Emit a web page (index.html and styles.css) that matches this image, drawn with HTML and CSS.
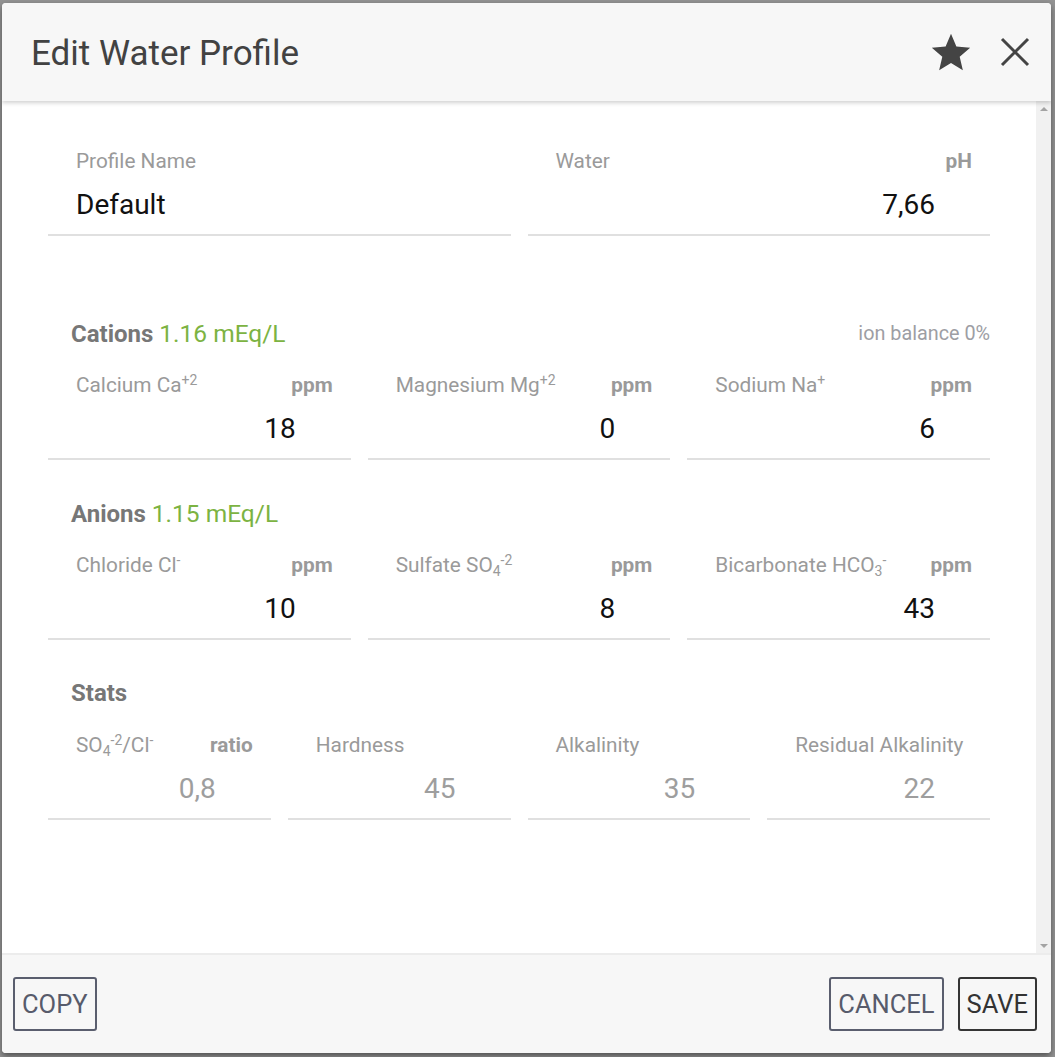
FILE: index.html
```html
<!DOCTYPE html>
<html lang="en">
<head>
<meta charset="utf-8">
<title>Edit Water Profile</title>
<link rel="stylesheet" href="styles.css">
</head>
<body>
<div class="dialog">
  <header class="dlg-head">
    <h1 class="title">Edit Water Profile</h1>
    <button class="icon-btn" aria-label="Favorite">
      <svg width="46" height="46" viewBox="0 0 24 24"><path d="M12 17.27L18.18 21l-1.64-7.03L22 9.24l-7.19-.61L12 2 9.19 8.63 2 9.24l5.46 4.73L5.82 21z" fill="#444"/></svg>
    </button>
    <button class="icon-btn close" aria-label="Close">
      <svg width="48" height="48" viewBox="0 0 48 48"><path d="M11 11L37 37M37 11L11 37" stroke="#444" stroke-width="3" fill="none"/></svg>
    </button>
  </header>

  <div class="dlg-main">
    <main class="dlg-body">
      <div class="grid g2">
        <div class="field">
          <div class="lbl"><span>Profile Name</span></div>
          <div class="val left">Default</div>
        </div>
        <div class="field">
          <div class="lbl"><span>Water</span><b>pH</b></div>
          <div class="val">7,66</div>
        </div>
      </div>

      <div class="sec first">
        <h2>Cations <span class="meq">1.16 mEq/L</span></h2>
        <span class="bal">ion balance 0%</span>
      </div>
      <div class="grid g3">
        <div class="field">
          <div class="lbl"><span>Calcium Ca<sup>+2</sup></span><b>ppm</b></div>
          <div class="val">18</div>
        </div>
        <div class="field">
          <div class="lbl"><span>Magnesium Mg<sup>+2</sup></span><b>ppm</b></div>
          <div class="val">0</div>
        </div>
        <div class="field">
          <div class="lbl"><span>Sodium Na<sup>+</sup></span><b>ppm</b></div>
          <div class="val">6</div>
        </div>
      </div>

      <div class="sec">
        <h2>Anions <span class="meq">1.15 mEq/L</span></h2>
      </div>
      <div class="grid g3">
        <div class="field">
          <div class="lbl"><span>Chloride Cl<sup>-</sup></span><b>ppm</b></div>
          <div class="val">10</div>
        </div>
        <div class="field">
          <div class="lbl"><span>Sulfate SO<sub>4</sub><sup>-2</sup></span><b>ppm</b></div>
          <div class="val">8</div>
        </div>
        <div class="field">
          <div class="lbl"><span>Bicarbonate HCO<sub>3</sub><sup>-</sup></span><b>ppm</b></div>
          <div class="val">43</div>
        </div>
      </div>

      <div class="sec">
        <h2>Stats</h2>
      </div>
      <div class="grid g4">
        <div class="field ro">
          <div class="lbl"><span>SO<sub>4</sub><sup>-2</sup>/Cl<sup>-</sup></span><b>ratio</b></div>
          <div class="val">0,8</div>
        </div>
        <div class="field ro">
          <div class="lbl"><span>Hardness</span></div>
          <div class="val">45</div>
        </div>
        <div class="field ro">
          <div class="lbl"><span>Alkalinity</span></div>
          <div class="val">35</div>
        </div>
        <div class="field ro">
          <div class="lbl"><span>Residual Alkalinity</span></div>
          <div class="val">22</div>
        </div>
      </div>
    </main>
    <div class="scrollbar" aria-hidden="true">
      <span class="sb-btn"><i class="arrow up"></i></span>
      <span class="sb-btn"><i class="arrow down"></i></span>
    </div>
  </div>

  <footer class="dlg-foot">
    <button class="btn">COPY</button>
    <div class="actions">
      <button class="btn">CANCEL</button>
      <button class="btn primary">SAVE</button>
    </div>
  </footer>
</div>
</body>
</html>
```

FILE: styles.css
```css
* { box-sizing: border-box; }

html, body {
  margin: 0;
  height: 100%;
}

body {
  background: #939393;
  padding: 3px 0 0 2px;
  font-family: Roboto, "Noto Sans", Arial, sans-serif;
  overflow: hidden;
}

.dialog {
  width: 1049px;
  height: 1050px;
  background: #fff;
  border-radius: 4px;
  overflow: hidden;
  display: flex;
  flex-direction: column;
  box-shadow: 0 3px 6px rgba(0, 0, 0, 0.45);
}

/* header */
.dlg-head {
  flex: 0 0 98px;
  display: flex;
  align-items: center;
  padding: 2px 12px 0 29px;
  background: #f7f7f7;
  box-shadow: 0 2px 4px rgba(0, 0, 0, 0.18);
  position: relative;
  z-index: 1;
}

.title {
  flex: 1;
  margin: 0;
  font-size: 35px;
  font-weight: 400;
  color: #424242;
}

.icon-btn {
  border: 0;
  background: none;
  padding: 0;
  margin: 0;
  display: flex;
  cursor: pointer;
}

.icon-btn.close {
  margin-left: 17px;
  margin-top: -2px;
}

/* body + fake scrollbar */
.dlg-main {
  flex: 1;
  display: flex;
  min-height: 0;
}

.dlg-body {
  flex: 1;
  padding: 49px 46px 0 46px;
  background: #fff;
}

.scrollbar {
  flex: 0 0 15px;
  background: #f1f1f1;
  display: flex;
  flex-direction: column;
  justify-content: space-between;
}

.sb-btn {
  height: 15px;
  display: flex;
  align-items: center;
  justify-content: center;
}

.arrow {
  width: 0;
  height: 0;
  border-left: 4px solid transparent;
  border-right: 4px solid transparent;
}
.arrow.up { border-bottom: 4px solid #a3a3a3; }
.arrow.down { border-top: 4px solid #a3a3a3; }

.grid {
  display: grid;
  column-gap: 17px;
}
.g2 { grid-template-columns: repeat(2, 1fr); }
.g3 { grid-template-columns: repeat(3, 1fr); }
.g4 { grid-template-columns: repeat(4, 1fr); }

.field {
  border-bottom: 2px solid #e0e0e0;
  padding-bottom: 14px;
}

.lbl {
  height: 22px;
  display: flex;
  justify-content: space-between;
  align-items: center;
  padding: 0 18px 0 28px;
  font-size: 20.8px;
  line-height: 22px;
  color: #9a9a9a;
  white-space: nowrap;
}

.lbl b {
  font-weight: 700;
  color: #9a9a9a;
}

.lbl sup {
  font-size: 14px;
  vertical-align: 7px;
  line-height: 0;
}

.lbl sub {
  font-size: 14px;
  vertical-align: -4px;
  line-height: 0;
}

.val {
  margin-top: 18px;
  height: 30px;
  font-size: 28px;
  line-height: 30px;
  color: #111;
  text-align: right;
  padding-right: 55px;
}

.val.left {
  text-align: left;
  padding-left: 28px;
}

.ro .val {
  color: #9e9e9e;
}

/* section headings */
.sec {
  display: flex;
  justify-content: space-between;
  align-items: center;
  height: 30px;
  margin: 38px 0 26px;
  padding-left: 23px;
}

.sec.first {
  margin-top: 82px;
}

.sec h2 {
  margin: 0;
  font-size: 24px;
  font-weight: 700;
  color: #777;
}

.meq {
  font-weight: 400;
  font-size: 24.5px;
  color: #7cb342;
}

.bal {
  font-size: 19.8px;
  color: #9d9ea4;
}

/* footer */
.dlg-foot {
  flex: 0 0 100px;
  display: flex;
  justify-content: space-between;
  align-items: flex-start;
  padding: 22px 14px 0 11px;
  background: #f7f7f7;
  border-top: 2px solid #ececec;
}

.actions {
  display: flex;
  gap: 14px;
}

.btn {
  font-family: Roboto, "Noto Sans", Arial, sans-serif;
  font-size: 25.5px;
  line-height: 50px;
  height: 54px;
  padding: 0 7px;
  border: 2px solid #5a5e6e;
  border-radius: 3px;
  background: transparent;
  color: #575b6b;
  cursor: pointer;
}

.btn.primary {
  border-color: #353535;
  color: #333;
}
```
